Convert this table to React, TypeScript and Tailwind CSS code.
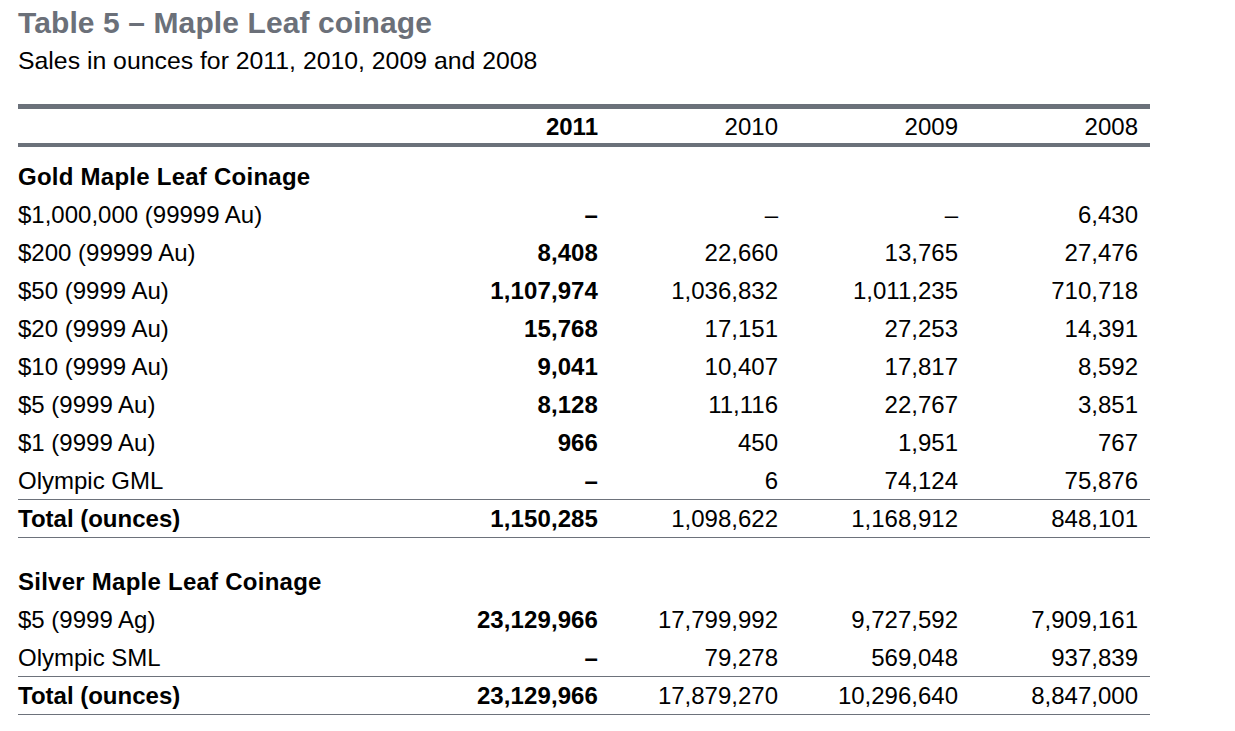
type Row = {
  label: string;
  values: [string, string, string, string];
  total?: boolean;
  ruleBelow?: boolean;
};

const gold: Row[] = [
  { label: "$1,000,000 (99999 Au)", values: ["–", "–", "–", "6,430"] },
  { label: "$200 (99999 Au)", values: ["8,408", "22,660", "13,765", "27,476"] },
  { label: "$50 (9999 Au)", values: ["1,107,974", "1,036,832", "1,011,235", "710,718"] },
  { label: "$20 (9999 Au)", values: ["15,768", "17,151", "27,253", "14,391"] },
  { label: "$10 (9999 Au)", values: ["9,041", "10,407", "17,817", "8,592"] },
  { label: "$5 (9999 Au)", values: ["8,128", "11,116", "22,767", "3,851"] },
  { label: "$1 (9999 Au)", values: ["966", "450", "1,951", "767"] },
  { label: "Olympic GML", values: ["–", "6", "74,124", "75,876"], ruleBelow: true },
  { label: "Total (ounces)", values: ["1,150,285", "1,098,622", "1,168,912", "848,101"], total: true, ruleBelow: true },
];

const silver: Row[] = [
  { label: "$5 (9999 Ag)", values: ["23,129,966", "17,799,992", "9,727,592", "7,909,161"] },
  { label: "Olympic SML", values: ["–", "79,278", "569,048", "937,839"], ruleBelow: true },
  { label: "Total (ounces)", values: ["23,129,966", "17,879,270", "10,296,640", "8,847,000"], total: true, ruleBelow: true },
];

const years = ["2011", "2010", "2009", "2008"];

function DataRow({ row }: { row: Row }) {
  return (
    <div
      className={`grid h-[38px] grid-cols-[400px_repeat(4,180px)] items-center pr-[12px] ${
        row.ruleBelow ? "border-b border-[#6d727b]" : ""
      }`}
    >
      <span className={row.total ? "font-bold" : ""}>{row.label}</span>
      {row.values.map((v, i) => (
        <span key={i} className={`text-right ${i === 0 ? "font-bold tracking-[0.1px]" : ""}`}>
          {v}
        </span>
      ))}
    </div>
  );
}

function SectionHeading({ children }: { children: string }) {
  return (
    <div className="flex h-[38px] items-center font-bold tracking-[0.25px]">{children}</div>
  );
}

export default function App() {
  return (
    <div className="min-h-screen bg-white pl-[18px] pt-[7px] font-['Liberation_Sans',Arial,sans-serif] text-black">
      <h1 className="text-[30px] leading-[32px] font-bold tracking-[0.1px] text-[#6b7079]">
        Table 5 – Maple Leaf coinage
      </h1>
      <p className="mt-[8px] text-[24.8px] leading-[28px]">
        Sales in ounces for 2011, 2010, 2009 and 2008
      </p>

      <div className="mt-[29px] w-[1132px] text-[24px] leading-[28px]">
        <div className="h-[5px] bg-[#6b717a]" />
        <div className="grid h-[34px] grid-cols-[400px_repeat(4,180px)] items-center pr-[12px] pt-[2px]">
          <span />
          {years.map((y, i) => (
            <span key={y} className={`text-right ${i === 0 ? "font-bold" : ""}`}>
              {y}
            </span>
          ))}
        </div>
        <div className="h-[4px] bg-[#6b717a]" />

        <div className="pt-[11px]">
          <SectionHeading>Gold Maple Leaf Coinage</SectionHeading>
          {gold.map((r, i) => (
            <DataRow key={i} row={r} />
          ))}
        </div>

        <div className="pt-[25px]">
          <SectionHeading>Silver Maple Leaf Coinage</SectionHeading>
          {silver.map((r, i) => (
            <DataRow key={i} row={r} />
          ))}
        </div>
      </div>
    </div>
  );
}
